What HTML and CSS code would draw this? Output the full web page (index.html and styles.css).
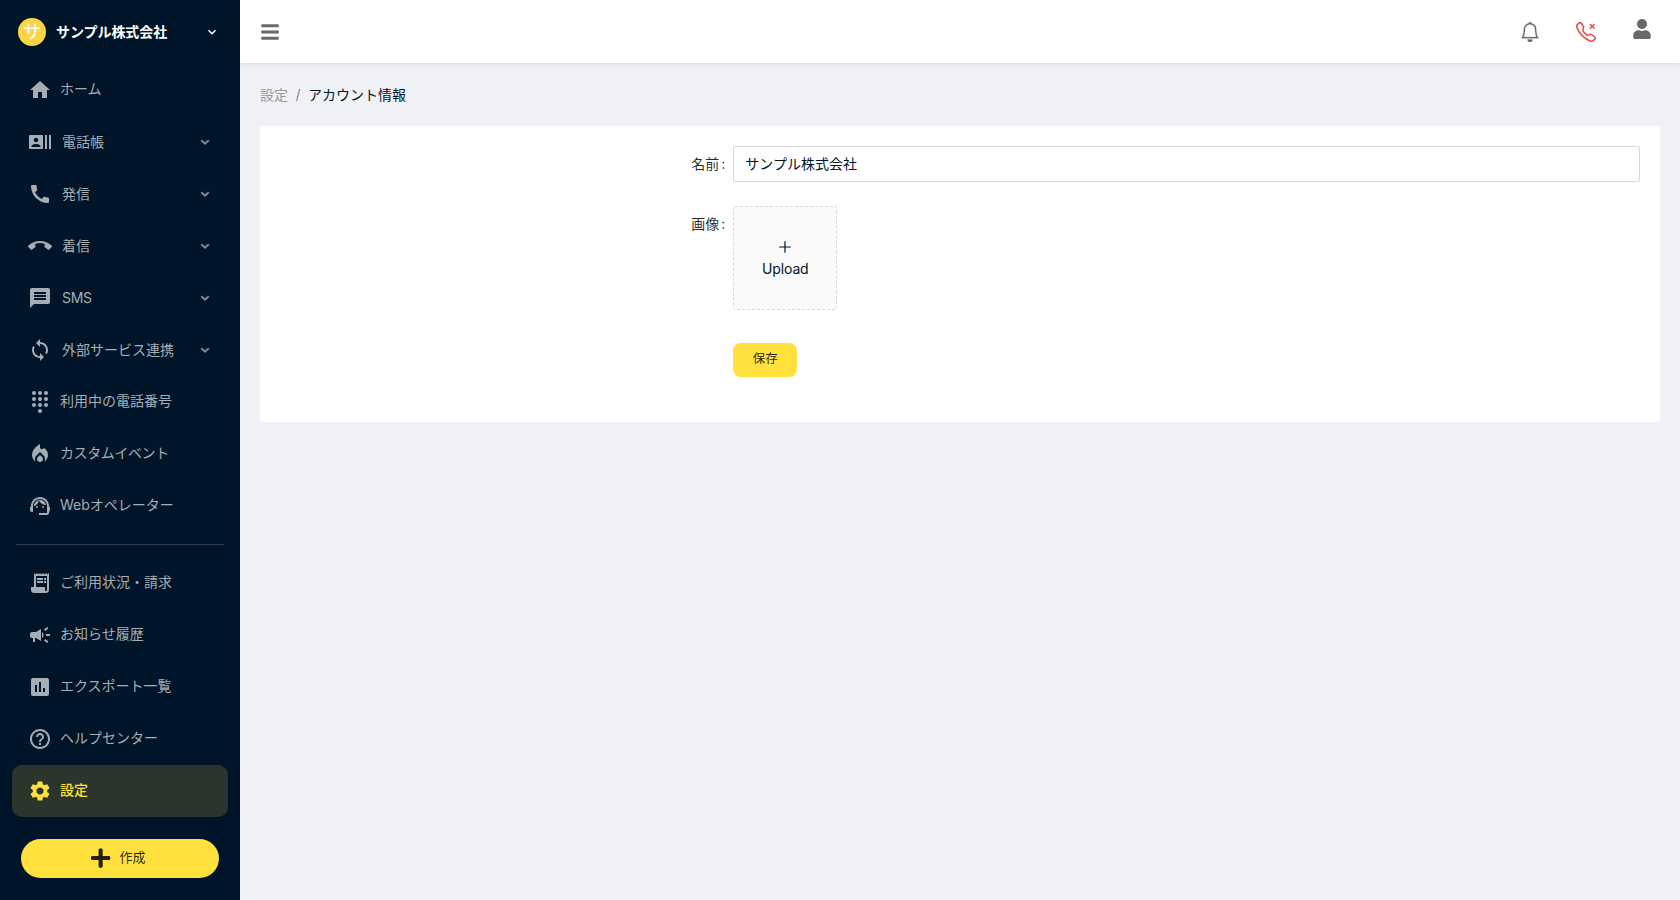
FILE: index.html
```html
<!DOCTYPE html>
<html lang="ja">
<head>
<meta charset="utf-8">
<title>アカウント情報</title>
<link rel="stylesheet" href="styles.css">
</head>
<body>
<div class="app">
  <aside class="sidebar">
    <div class="org">
      <span class="avatar">サ</span>
      <span class="org-name">サンプル株式会社</span>
      <svg class="chev" viewBox="0 0 10 10"><path d="M1.5 3.2 5 6.7l3.5-3.5"/></svg>
    </div>
    <nav class="menu">
      <a class="item"><svg viewBox="0 0 24 24"><path d="M10 20v-6h4v6h5v-8h3L12 3 2 12h3v8z"/></svg><span>ホーム</span></a>
      <a class="item sub"><svg viewBox="0 0 24 24"><path d="M21 5v14h2V5h-2zm-4 14h2V5h-2v14zM14 5H2c-.55 0-1 .45-1 1v12c0 .55.45 1 1 1h12c.55 0 1-.45 1-1V6c0-.55-.45-1-1-1zM8 7.75c1.24 0 2.25 1.01 2.25 2.25S9.24 12.25 8 12.25 5.75 11.24 5.75 10 6.76 7.75 8 7.75zM12.5 17h-9v-.75c0-1.5 3-2.25 4.5-2.25s4.500.75 4.500 2.25V17z"/></svg><span>電話帳</span><svg class="chev" viewBox="0 0 10 10"><path d="M1.2 3.2 5 6.600l3.800-3.400"/></svg></a>
      <a class="item sub"><svg viewBox="0 0 24 24"><path d="M20.010 15.380c-1.230 0-2.420-.2-3.530-.56-.35-.12-.74-.03-1.010.24l-1.570 1.970c-2.830-1.350-5.480-3.900-6.890-6.830l1.950-1.660c.27-.28.35-.67.24-1.020-.37-1.110-.56-2.300-.56-3.530 0-.54-.45-.99-.99-.99H4.190C3.650 3 3 3.240 3 3.990 3 13.280 10.730 21 20.010 21c.71 0 .99-.63.99-1.180v-3.450c0-.54-.45-.99-.99-.99z"/></svg><span>発信</span><svg class="chev" viewBox="0 0 10 10"><path d="M1.2 3.2 5 6.600l3.800-3.400"/></svg></a>
      <a class="item sub"><svg viewBox="0 0 24 24"><path d="M12 9c-1.600 0-3.150.25-4.600.72v3.100c0 .39-.23.74-.56.9-.98.49-1.870 1.120-2.660 1.850-.18.18-.43.28-.7.28-.28 0-.53-.11-.71-.29L.29 13.080c-.18-.17-.29-.42-.29-.7 0-.28.11-.53.29-.71C3.340 8.780 7.460 7 12 7s8.660 1.780 11.710 4.670c.18.18.29.43.29.71 0 .28-.11.53-.29.71l-2.480 2.480c-.18.18-.43.29-.71.29-.27 0-.52-.11-.7-.28-.79-.74-1.690-1.360-2.670-1.850-.33-.16-.56-.5-.56-.9v-3.100C15.150 9.250 13.600 9 12 9z"/></svg><span>着信</span><svg class="chev" viewBox="0 0 10 10"><path d="M1.2 3.2 5 6.600l3.800-3.400"/></svg></a>
      <a class="item sub latin"><svg viewBox="0 0 24 24"><path d="M20 2H4c-1.100 0-1.990.9-1.990 2L2 22l4-4h14c1.100 0 2-.9 2-2V4c0-1.100-.9-2-2-2zm-2 12H6v-2h12v2zm0-3H6V9h12v2zm0-3H6V6h12v2z"/></svg><span>SMS</span><svg class="chev" viewBox="0 0 10 10"><path d="M1.2 3.2 5 6.600l3.800-3.400"/></svg></a>
      <a class="item sub"><svg viewBox="0 0 24 24"><path d="M12 4V1L8 5l4 4V6c3.310 0 6 2.690 6 6 0 1.010-.25 1.970-.7 2.800l1.460 1.460C19.540 15.030 20 13.570 20 12c0-4.420-3.580-8-8-8zm0 14c-3.310 0-6-2.690-6-6 0-1.010.25-1.970.7-2.800L5.240 7.740C4.460 8.970 4 10.430 4 12c0 4.420 3.580 8 8 8v3l4-4-4-4v3z"/></svg><span>外部サービス連携</span><svg class="chev" viewBox="0 0 10 10"><path d="M1.2 3.2 5 6.600l3.800-3.400"/></svg></a>
      <a class="item"><svg viewBox="0 0 24 24"><circle cx="6" cy="3" r="2"/><circle cx="12" cy="3" r="2"/><circle cx="18" cy="3" r="2"/><circle cx="6" cy="9" r="2"/><circle cx="12" cy="9" r="2"/><circle cx="18" cy="9" r="2"/><circle cx="6" cy="15" r="2"/><circle cx="12" cy="15" r="2"/><circle cx="18" cy="15" r="2"/><circle cx="12" cy="21" r="2"/></svg><span>利用中の電話番号</span></a>
      <a class="item tight"><svg viewBox="0 0 24 24"><path d="M12 12.900l-2.130 2.090C9.310 15.550 9 16.280 9 17.060 9 18.680 10.350 20 12 20s3-1.320 3-2.940c0-.78-.31-1.520-.87-2.070L12 12.900z"/><path d="M16 6l-.44.55C14.380 8.020 12 7.190 12 5.300V2S4 6 4 13c0 2.920 1.560 5.470 3.890 6.860-.56-.79-.89-1.760-.89-2.800 0-1.320.52-2.560 1.470-3.500L12 10.100l3.530 3.470c.95.93 1.470 2.170 1.470 3.500 0 1.020-.31 1.960-.85 2.750 1.890-1.150 3.290-3.060 3.710-5.300.66-3.550-1.070-6.900-3.860-8.520z"/></svg><span>カスタムイベント</span></a>
      <a class="item"><svg viewBox="0 0 24 24"><path d="M21 12.220C21 6.730 16.740 3 12 3c-4.690 0-9 3.650-9 9.280-.6.34-1 .98-1 1.720v2c0 1.100.9 2 2 2h1v-6.100c0-3.870 3.130-7 7-7s7 3.130 7 7V19h-8v2h8c1.100 0 2-.9 2-2v-1.220c.59-.31 1-.92 1-1.640v-2.300c0-.7-.41-1.310-1-1.620z"/><circle cx="9" cy="13" r="1"/><circle cx="15" cy="13" r="1"/><path d="M18 11.030C17.520 8.180 15.040 6 12.050 6c-3.030 0-6.290 2.510-6.030 6.450 2.470-1.010 4.330-3.210 4.860-5.890 1.310 2.630 4 4.440 7.120 4.470z"/></svg><span>Webオペレーター</span></a>
      <hr class="divider">
      <a class="item"><svg viewBox="0 0 24 24"><path d="M19.500 3.500L18 2l-1.500 1.500L15 2l-1.500 1.500L12 2l-1.500 1.500L9 2 7.500 3.500 6 2v14H3v3c0 1.660 1.340 3 3 3h12c1.660 0 3-1.340 3-3V2l-1.500 1.500zM19 19c0 .55-.45 1-1 1s-1-.45-1-1v-3H8V5h11v14z"/><path d="M9 7h6v2H9zM16 7h2v2h-2zM9 10h6v2H9zM16 10h2v2h-2z"/></svg><span>ご利用状況・請求</span></a>
      <a class="item"><svg viewBox="0 0 24 24"><path d="M18 11v2h4v-2h-4zm-2 6.610c.96.71 2.210 1.650 3.200 2.390.4-.53.8-1.070 1.200-1.600-.99-.74-2.240-1.680-3.200-2.400-.4.54-.8 1.080-1.200 1.610zM20.400 5.600c-.4-.53-.8-1.070-1.200-1.600-.99.74-2.240 1.680-3.200 2.400.4.53.8 1.070 1.200 1.600.96-.72 2.210-1.650 3.200-2.400zM4 9c-1.100 0-2 .9-2 2v2c0 1.100.9 2 2 2h1v4h2v-4h1l5 3V6L8 9H4zm11.500 3c0-1.330-.58-2.530-1.500-3.350v6.690c.92-.81 1.500-2.010 1.500-3.340z"/></svg><span>お知らせ履歴</span></a>
      <a class="item"><svg viewBox="0 0 24 24"><path d="M19 3H5c-1.100 0-2 .9-2 2v14c0 1.100.9 2 2 2h14c1.100 0 2-.9 2-2V5c0-1.100-.9-2-2-2zM9 17H7v-7h2v7zm4 0h-2V7h2v10zm4 0h-2v-4h2v4z"/></svg><span>エクスポート一覧</span></a>
      <a class="item"><svg viewBox="0 0 24 24"><path d="M11 18h2v-2h-2v2zm1-16C6.480 2 2 6.480 2 12s4.480 10 10 10 10-4.480 10-10S17.520 2 12 2zm0 18c-4.410 0-8-3.590-8-8s3.590-8 8-8 8 3.590 8 8-3.590 8-8 8zm0-14c-2.210 0-4 1.790-4 4h2c0-1.100.9-2 2-2s2 .9 2 2c0 2-3 1.750-3 5h2c0-2.250 3-2.500 3-5 0-2.210-1.790-4-4-4z"/></svg><span>ヘルプセンター</span></a>
      <a class="item active"><svg viewBox="0 0 24 24"><path d="M19.140 12.940c.04-.3.06-.61.06-.94 0-.32-.02-.64-.07-.94l2.030-1.580c.18-.14.23-.41.12-.61l-1.920-3.320c-.12-.22-.37-.29-.59-.22l-2.390.96c-.5-.38-1.030-.7-1.620-.94l-.36-2.540c-.04-.24-.24-.41-.48-.41h-3.840c-.24 0-.43.17-.47.41l-.36 2.540c-.59.24-1.130.57-1.620.94l-2.390-.96c-.22-.08-.47 0-.59.22L2.740 8.870c-.12.21-.08.47.12.61l2.030 1.580c-.05.3-.09.63-.09.94s.02.64.07.94l-2.030 1.580c-.18.14-.23.41-.12.61l1.920 3.320c.12.22.37.29.59.22l2.390-.96c.5.38 1.030.7 1.620.94l.36 2.540c.05.24.24.41.48.41h3.840c.24 0 .44-.17.47-.41l.36-2.540c.59-.24 1.130-.56 1.620-.94l2.390.96c.22.08.47 0 .59-.22l1.920-3.320c.12-.22.07-.47-.12-.61l-2.010-1.580zM12 15.600c-1.980 0-3.600-1.620-3.600-3.600s1.620-3.600 3.600-3.600 3.600 1.620 3.600 3.600-1.620 3.600-3.600 3.600z"/></svg><span>設定</span></a>
    </nav>
    <button class="create"><svg viewBox="0 0 448 512"><path d="M416 208H272V64c0-17.670-14.330-32-32-32h-32c-17.670 0-32 14.330-32 32v144H32c-17.670 0-32 14.330-32 32v32c0 17.670 14.330 32 32 32h144v144c0 17.670 14.330 32 32 32h32c17.670 0 32-14.330 32-32V304h144c17.670 0 32-14.330 32-32v-32c0-17.670-14.330-32-32-32z"/></svg><span>作成</span></button>
  </aside>
  <div class="main">
    <header class="topbar">
      <svg class="bars" viewBox="0 0 448 512"><rect y="60" width="448" height="72" rx="16"/><rect y="220" width="448" height="72" rx="16"/><rect y="380" width="448" height="72" rx="16"/></svg>
      <div class="tools">
        <svg class="bell" viewBox="0 0 16 16"><path d="M8 16a2 2 0 0 0 2-2H6a2 2 0 0 0 2 2zM8 1.918l-.797.161A4.002 4.002 0 0 0 4 6c0 .628-.134 2.197-.459 3.742-.16.767-.376 1.566-.663 2.258h10.244c-.287-.692-.502-1.490-.663-2.258C12.134 8.197 12 6.628 12 6a4.002 4.002 0 0 0-3.203-3.920L8 1.917zM14.220 12c.223.447.481.801.78 1H1c.299-.199.557-.553.78-1C2.680 10.200 3 6.880 3 6c0-2.420 1.720-4.440 4.005-4.901a1 1 0 1 1 1.990 0A5.002 5.002 0 0 1 13 6c0 .88.32 4.200 1.220 6z"/></svg>
        <svg class="phone-x" viewBox="0 0 16 16"><path d="M3.654 1.328a.678.678 0 0 0-1.015-.063L1.605 2.300c-.483.484-.661 1.169-.45 1.770a17.568 17.568 0 0 0 4.168 6.608 17.569 17.569 0 0 0 6.608 4.168c.601.211 1.286.033 1.770-.45l1.034-1.034a.678.678 0 0 0-.063-1.015l-2.307-1.794a.678.678 0 0 0-.58-.122l-2.190.547a1.745 1.745 0 0 1-1.657-.459L5.482 8.062a1.745 1.745 0 0 1-.46-1.657l.548-2.190a.678.678 0 0 0-.122-.58L3.654 1.328zM1.884.511a1.745 1.745 0 0 1 2.612.163L6.290 2.980c.329.423.445.974.315 1.494l-.547 2.190a.678.678 0 0 0 .178.643l2.457 2.457a.678.678 0 0 0 .644.178l2.189-.547a1.745 1.745 0 0 1 1.494.315l2.306 1.794c.829.645.905 1.870.163 2.611l-1.034 1.034c-.74.74-1.846 1.065-2.877.702a18.634 18.634 0 0 1-7.010-4.420 18.634 18.634 0 0 1-4.420-7.009c-.362-1.030-.037-2.137.703-2.877L1.885.511z"/><path d="M11.146 1.646a.5.5 0 0 1 .708 0L13 2.793l1.146-1.147a.5.5 0 0 1 .708.708L13.707 3.500l1.147 1.146a.5.5 0 0 1-.708.708L13 4.207l-1.146 1.147a.5.5 0 0 1-.708-.708L12.293 3.500l-1.147-1.146a.5.5 0 0 1 0-.708z"/></svg>
        <svg class="user" viewBox="0 0 448 512"><path d="M224 256c70.700 0 128-57.300 128-128S294.700 0 224 0 96 57.300 96 128s57.300 128 128 128zm89.600 32h-16.700c-22.200 10.200-46.900 16-72.900 16s-50.600-5.800-72.900-16h-16.700C60.200 288 0 348.200 0 422.400V464c0 26.500 21.500 48 48 48h352c26.500 0 48-21.500 48-48v-41.600c0-74.200-60.200-134.400-134.400-134.400z"/></svg>
      </div>
    </header>
    <div class="breadcrumb"><span class="parent">設定</span><span class="sep">/</span><span>アカウント情報</span></div>
    <section class="card">
      <div class="row">
        <label class="label">名前<i>:</i></label>
        <div class="input">サンプル株式会社</div>
      </div>
      <div class="row">
        <label class="label">画像<i>:</i></label>
        <div class="upload">
          <svg viewBox="0 0 14 14"><path d="M7 1.200v11.600M1.200 7h11.600"/></svg>
          <span>Upload</span>
        </div>
      </div>
      <div class="row">
        <span></span>
        <button class="save">保存</button>
      </div>
    </section>
  </div>
</div>
</body>
</html>
```
FILE: styles.css
```css
* { box-sizing: border-box; }
body {
  margin: 0;
  font-family: Inter, "Noto Sans CJK JP", sans-serif;
  font-size: 14px;
  line-height: 22px;
  color: #001529;
}
button { font-family: inherit; border: 0; color: rgba(0, 0, 0, .85); }
svg { display: block; flex: none; fill: currentColor; }
.app { display: flex; height: 900px; overflow: hidden; }

.sidebar { width: 240px; flex: none; background: #001529; display: flex; flex-direction: column; }
.org { height: 64px; padding: 0 23px 0 18px; display: flex; align-items: center; color: #fff; }
.avatar {
  width: 28px; height: 28px; border-radius: 50%; background: #fdd444;
  font-size: 18px; line-height: 27px; text-align: center;
}
.org-name { margin-left: 10px; flex: 1; font-weight: 700; letter-spacing: -.05px; }
.chev { width: 10px; height: 10px; fill: none; stroke: currentColor; stroke-width: 1.5; }
.menu { padding: 0 12px; display: flex; flex-direction: column; }
.item {
  height: 52px; padding: 0 18px 0 16px; border-radius: 10px;
  display: flex; align-items: center; color: #a6adb4;
}
.item > svg:first-child { width: 24px; height: 24px; }
.item span { margin-left: 8px; padding-bottom: 2px; flex: 1; white-space: nowrap; }
.item.sub span { margin-left: 10px; padding-bottom: 1px; }
.item.latin span { padding-bottom: 0; letter-spacing: -.3px; }
.item.tight span { letter-spacing: -.4px; }
.item .chev { opacity: .75; stroke-width: 2; margin-bottom: 1px; }
.item.active { background: #2b352c; color: #ffe03d; font-weight: 500; }
.divider { width: 208px; height: 1px; margin: 12px auto; border: 0; background: #2e3d4d; flex: none; }
.create {
  width: 198px; height: 39px; margin: 22px 0 0 21px; padding: 0 3px 1px 0; border-radius: 20px;
  background: #ffe03d; display: flex; align-items: center; justify-content: center; gap: 9px;
  font-size: 13px;
}
.create svg { width: 19.25px; height: 22px; }
.create span { line-height: 20px; padding-bottom: 3px; }

.main { flex: 1; min-width: 0; background: #f0f1f5; }
.topbar {
  position: relative; height: 63px; padding: 0 29px 0 21px; background: #fff;
  box-shadow: 0 1px 4px rgba(0, 21, 41, .12);
  display: flex; align-items: center; justify-content: space-between; color: #696969;
}
.bars { width: 18px; height: 20px; margin-top: 1px; }
.tools { display: flex; align-items: center; gap: 36px; padding-top: 1px; }
.bell, .phone-x { width: 20px; height: 20px; }
.bell { stroke: currentColor; stroke-width: .2; }
.phone-x { color: #e5423d; stroke: currentColor; stroke-width: .15; }
.user { width: 18px; height: 20px; margin: 0 0 6px 1px; }
.breadcrumb { height: 63px; padding: 21px 20px 0; display: flex; }
.parent { color: #969799; }
.sep { margin: 0 7.500px; color: #85868a; }

.card { margin: 0 20px; height: 296px; padding: 20px; background: #fff; display: flex; flex-direction: column; gap: 24px; }
.row { display: grid; grid-template-columns: 1fr 2fr; align-items: start; }
.label { height: 36px; line-height: 35px; text-align: right; color: rgba(0, 0, 0, .85); }
.label i { font-style: normal; margin: 0 8px 0 2px; }
.input { height: 36px; border: 1px solid #d9d9d9; border-radius: 2px; padding: 0 11px; line-height: 33px; }
.upload {
  width: 104px; height: 104px; padding-top: 4px; border: 1px dashed #d9d9d9; border-radius: 2px; background: #fafafa;
  display: flex; flex-direction: column; align-items: center; justify-content: center;
}
.upload span { letter-spacing: -.15px; }
.upload svg { width: 14px; height: 14px; margin-bottom: 4px; fill: none; stroke: currentColor; stroke-width: 1.200; }
.save { width: 64px; height: 34px; margin-top: 9px; padding: 0 0 5px; border-radius: 8px; background: #ffe03d; font-size: 12.500px; }
```
